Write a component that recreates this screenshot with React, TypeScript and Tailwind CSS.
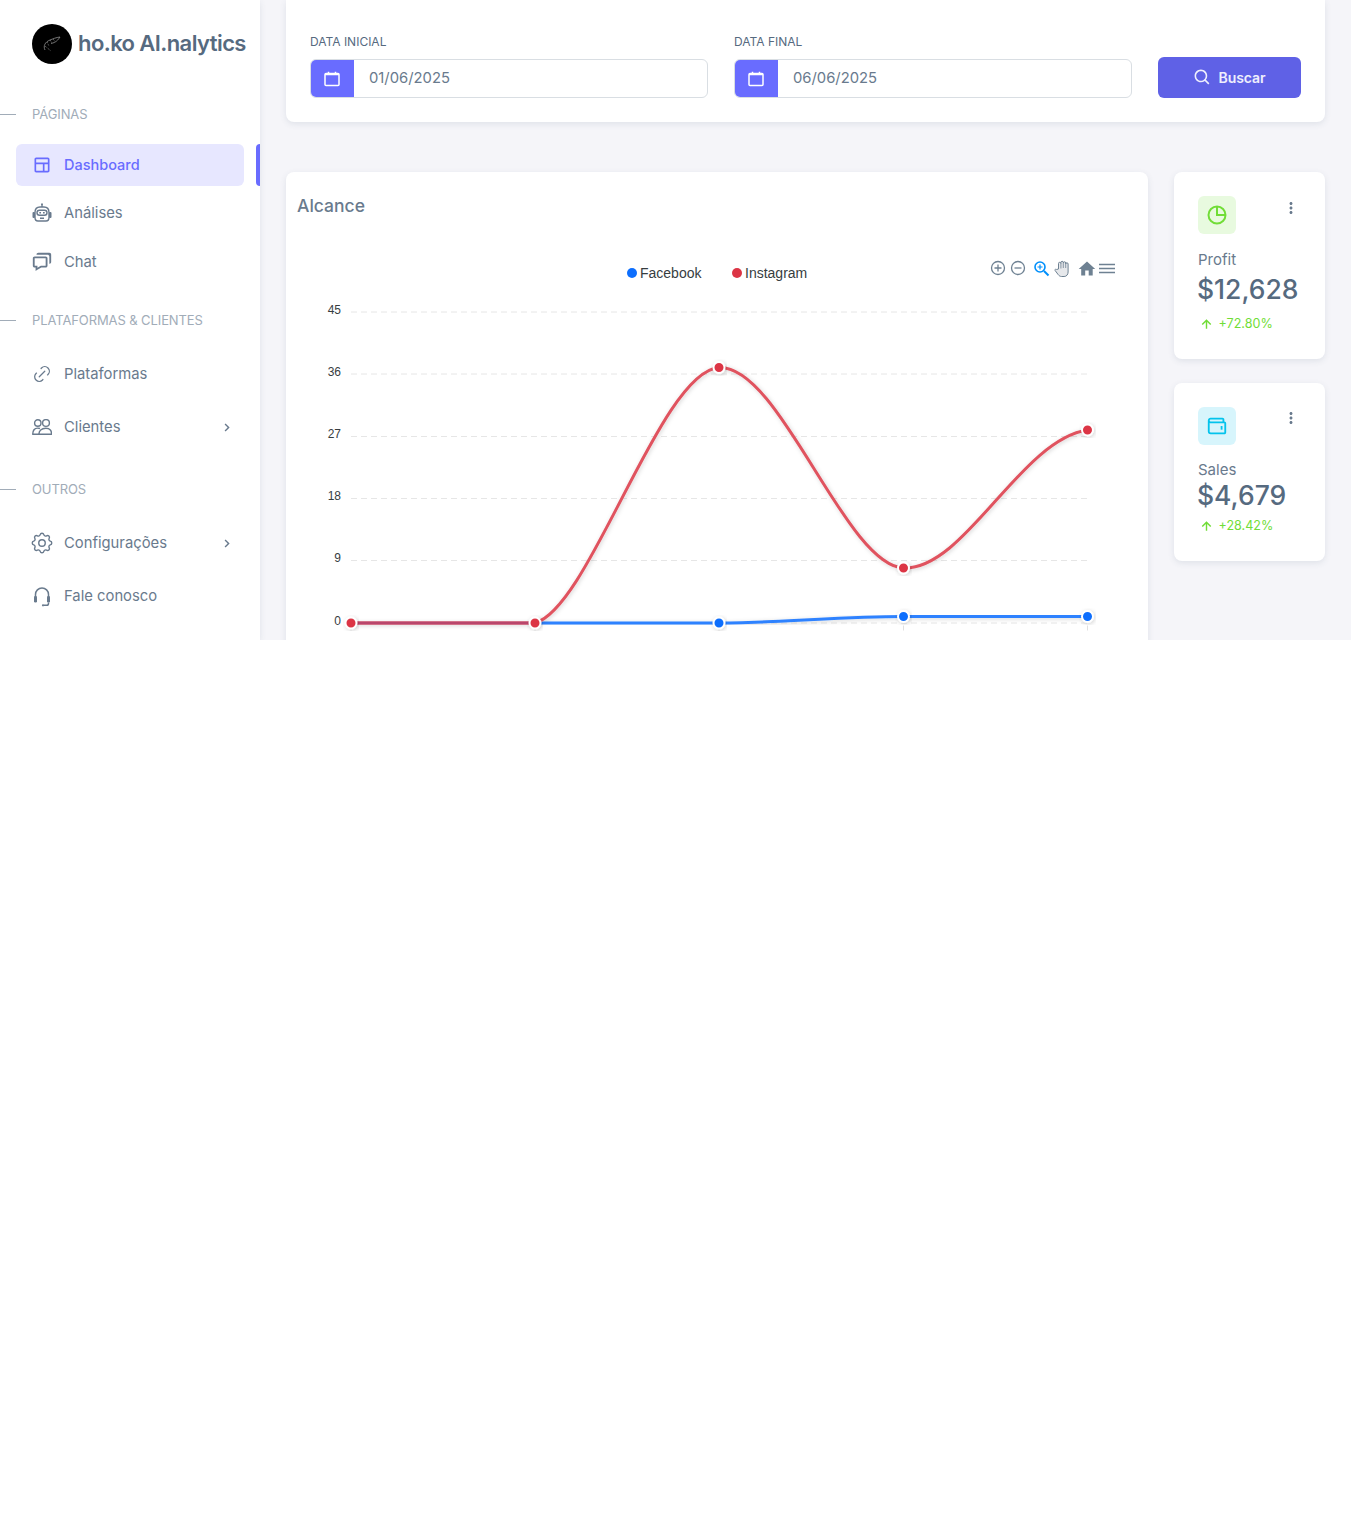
import { ReactNode } from 'react';
import {
  BiChat,
  BiChevronRight,
  BiDotsVerticalRounded,
  BiLayout,
  BiSearch,
  BiUpArrowAlt,
  BiWallet,
} from 'react-icons/bi';
import { TbLink, TbSettings } from 'react-icons/tb';

function BotIcon() {
  return (
    <svg width="20" height="20" viewBox="0 0 20 20" fill="none" stroke="#697a8d" strokeWidth="1.400">
      <path d="M10 1v3" />
      <circle cx="10" cy="1.200" r="0.900" fill="#697a8d" stroke="none" />
      <path d="M3 9.500c0-3.500 2-5.500 5-5.500h4c3 0 5 2 5 5.500v5c0 2-1 3.500-3 3.500H6c-2 0-3-1.500-3-3.500z" />
      <rect x="0.500" y="9" width="2.500" height="6" rx="1" fill="#697a8d" stroke="none" />
      <rect x="17" y="9" width="2.500" height="6" rx="1" fill="#697a8d" stroke="none" />
      <rect x="5" y="7.300" width="10" height="5" rx="2.500" />
      <path d="M7.300 9.800h1.700M11 9.800h1.700M8 15.300h4" />
    </svg>
  );
}

function UsersIcon() {
  return (
    <svg width="20" height="16" viewBox="0 0 20 16" fill="none" stroke="#697a8d" strokeWidth="1.400">
      <circle cx="5.800" cy="4" r="3.200" />
      <circle cx="14" cy="4" r="3.400" />
      <path d="M7 15.300c-.3-3.500 2.500-6 6.800-6s6 2.500 5.600 6z" strokeLinejoin="round" />
      <path d="M8 9.500c-.8-.3-1.500-.4-2.300-.4-3 0-5 2.500-5 6.200h6.300" strokeLinejoin="round" />
    </svg>
  );
}

function HeadsetIcon() {
  return (
    <svg width="20" height="21" viewBox="0 0 20 21" fill="none" stroke="#697a8d" strokeWidth="1.500">
      <path d="M3.500 11V8.500a6.500 6.500 0 0 1 13 0V11" />
      <rect x="2" y="10" width="3" height="6.500" rx="1.300" fill="#697a8d" stroke="none" />
      <rect x="15" y="10" width="3" height="6.500" rx="1.300" fill="#697a8d" stroke="none" />
      <path d="M16.500 16.500v1a1.800 1.800 0 0 1-1.800 1.800h-3" />
      <circle cx="11" cy="19.300" r="1.100" fill="#697a8d" stroke="none" />
    </svg>
  );
}

function SectionLabel({ children, className }: { children: ReactNode; className: string }) {
  return (
    <div className={`flex items-center gap-4 h-4 ${className}`}>
      <div className="w-4 h-px bg-[#a1acb8] -mt-px" />
      <span className="text-[13px] text-[#a1acb8] uppercase tracking-[-0.1px]">{children}</span>
    </div>
  );
}

function NavItem({
  icon,
  label,
  className,
  chevron,
}: {
  icon: ReactNode;
  label: string;
  className: string;
  chevron?: boolean;
}) {
  return (
    <div className={`flex items-center h-[42px] pl-8 pr-[25px] text-[#697a8d] text-[14.8px] ${className}`}>
      <div className="w-5 flex justify-center text-[#697a8d]">{icon}</div>
      <span className="ml-3">{label}</span>
      {chevron && <BiChevronRight className="ml-auto text-[17px]" />}
    </div>
  );
}

function CalendarIcon() {
  return (
    <svg width="16" height="16" viewBox="0 0 16 16" fill="none" stroke="white" strokeWidth="1.500">
      <rect x="1" y="2.500" width="14" height="12" rx="1" />
      <path d="M1 3.500h14M4.500 0.800v2M11.500 0.800v2" />
    </svg>
  );
}

function DateField({ label, value }: { label: string; value: string }) {
  return (
    <div className="flex-1">
      <label className="block text-[12px] leading-4 text-[#566a7f] uppercase mb-[9px]">{label}</label>
      <div className="flex h-[39px] rounded-md border border-[#d9dee3] overflow-hidden bg-white">
        <div className="w-[44px] -ml-px -my-px flex items-center justify-center bg-[#696cff]">
          <CalendarIcon />
        </div>
        <div className="flex items-center pl-[15px] text-[14.8px] text-[#697a8d]">{value}</div>
      </div>
    </div>
  );
}

function StatCard({
  icon,
  iconBg,
  label,
  value,
  change,
  className,
  labelClass,
  valueClass,
  dotsClass,
}: {
  icon: ReactNode;
  iconBg: string;
  label: string;
  value: string;
  change: string;
  className: string;
  labelClass: string;
  valueClass: string;
  dotsClass: string;
}) {
  return (
    <div className={`bg-white rounded-lg shadow-[0_2px_6px_0_rgba(67,89,113,0.12)] px-6 pt-6 ${className}`}>
      <div className="flex justify-between">
        <div className={`w-[38px] h-[38px] rounded-md flex items-center justify-center ${iconBg}`}>{icon}</div>
        <BiDotsVerticalRounded className={`text-[18px] text-[#697a8d] mr-[1px] ${dotsClass}`} />
      </div>
      <div className={`text-[15px] leading-5 text-[#697a8d] ${labelClass}`}>{label}</div>
      <div className={`text-[26.5px] font-medium leading-[38px] text-[#566a7f] -ml-px ${valueClass}`}>{value}</div>
      <div className="flex items-center text-[12.6px] text-[#71dd37]">
        <BiUpArrowAlt className="text-[17px] ml-[-0.5px]" />
        <span className="ml-[4px]">{change}</span>
      </div>
    </div>
  );
}

const gridLines = [
  { y: 312, label: '45', ty: 314 },
  { y: 374, label: '36', ty: 376 },
  { y: 436.5, label: '27', ty: 438 },
  { y: 498.5, label: '18', ty: 500 },
  { y: 560.5, label: '9', ty: 562 },
  { y: 623, label: '0', ty: 625 },
];

const redPoints = [
  [351, 623],
  [535, 623],
  [719, 367.5],
  [903.5, 568],
  [1087.5, 430],
];

const bluePoints = [
  [719, 623],
  [903.5, 616.5],
  [1087.5, 616.5],
];

function ReachChart() {
  return (
    <svg className="block" width="862" height="440" viewBox="286 232 862 440" fontFamily="'Liberation Sans', Arial, sans-serif">
      <defs>
        <filter id="soft" x="-20%" y="-20%" width="140%" height="140%">
          <feDropShadow dx="1" dy="1" stdDeviation="2" floodColor="#000" floodOpacity="0.18" />
        </filter>
      </defs>

      <circle cx="632" cy="273" r="5" fill="#0d6efd" />
      <text x="640" y="278" fontSize="14" fill="#373d3f">Facebook</text>
      <circle cx="737" cy="273" r="5" fill="#dc3545" />
      <text x="745" y="278" fontSize="14" fill="#373d3f">Instagram</text>

      {/* toolbar */}
      <g fill="none" stroke="#6e8192" strokeWidth="1.300">
        <circle cx="998" cy="268" r="6.500" />
        <path d="M994.500 268h7M998 264.500v7" />
        <circle cx="1018" cy="268" r="6.500" />
        <path d="M1014.500 268h7" />
      </g>
      <g fill="none" stroke="#008ffb">
        <circle cx="1040" cy="267" r="5" strokeWidth="1.600" />
        <path d="M1044 271l4.500 4.500" strokeWidth="2" />
        <path d="M1037.500 267h5M1040 264.500v5" strokeWidth="1.200" />
      </g>
      <path
        d="M1058.500 269v-5.500a1.200 1.200 0 0 1 2.400 0v-1a1.200 1.200 0 0 1 2.400 0v.5a1.200 1.200 0 0 1 2.400 0v1a1.200 1.200 0 0 1 2.400 0v8c0 2.500-1.500 4.500-4 4.500h-2.500c-1.500 0-2.500-.7-3.500-2l-3-4c-.7-1 .8-1.800 1.500-1z"
        fill="#e6e8eb"
        stroke="#6e8192"
        strokeWidth="1"
      />
      <path d="M1060.900 263.500v5M1063.300 263v5M1065.700 264v4" stroke="#6e8192" strokeWidth="0.800" />
      <path d="M1085.200 275.500v-5h3.500v5h4v-6.500h2.500l-8.200-7.400-8.300 7.400h2.500v6.500z" fill="#6e8192" />
      <path d="M1099 264.500h16M1099 268.500h16M1099 272.500h16" stroke="#6e8192" strokeWidth="1.700" />

      {gridLines.map((g) => (
        <g key={g.label}>
          <line x1="351" x2="1087" y1={g.y} y2={g.y} stroke="#e6e6e6" strokeDasharray="6 4" />
          <text x="341" y={g.ty} textAnchor="end" fontSize="12" fill="#373d3f">{g.label}</text>
        </g>
      ))}
      <path d="M351 625.500v5M535 625.500v5M719 625.500v5M903.500 625.500v5M1087.500 625.500v5" stroke="#e0e0e0" />

      <path
        d="M535 623H719C780 623 840 616.500 903.500 616.500H1087.500"
        fill="none"
        stroke="#2f82ff"
        strokeWidth="3"
        filter="url(#soft)"
      />
      <path
        d="M351 623H535C590 608 660 372 719 367.500C780 365 845 565 903.500 568C965 570 1020 440 1087.500 430"
        fill="none"
        stroke="#e0535f"
        strokeWidth="3"
        filter="url(#soft)"
      />
      <path d="M351 623H535" stroke="#b9466c" strokeWidth="3" />

      {bluePoints.map(([x, y]) => (
        <circle key={x} cx={x} cy={y} r="5.500" fill="#0d6efd" stroke="#fff" strokeWidth="2" filter="url(#soft)" />
      ))}
      {redPoints.map(([x, y]) => (
        <circle key={x} cx={x} cy={y} r="5.500" fill="#dc3545" stroke="#fff" strokeWidth="2" filter="url(#soft)" />
      ))}
    </svg>
  );
}

export default function App() {
  return (
    <div className="h-[640px] overflow-hidden flex bg-[#f5f5f9] font-['Inter','Liberation_Sans',sans-serif]">
      {/* Sidebar */}
      <aside className="w-[260px] shrink-0 bg-white shadow-[0_2px_6px_0_rgba(67,89,113,0.12)]">
        <div className="flex items-center pl-8 pt-6">
          <div className="w-10 h-10 rounded-full bg-black flex items-center justify-center">
            <svg width="20" height="18" viewBox="0 0 20 18" fill="none" stroke="#8f8f8f" strokeWidth="0.800">
              <path d="M3 15c-2-4 0-8 5-10 3-1.200 6-2.500 10-3-2 3-4 5.500-9 6.500" />
              <path d="M5 7l2 4M8 5l2 3M11 4l2 2.500M3 11l6 5" strokeDasharray="1 1" />
            </svg>
          </div>
          <span className="ml-[6px] -mt-[2px] text-[22px] leading-10 font-semibold text-[#566a7f] tracking-[-0.58px]">ho.ko AI.nalytics</span>
        </div>

        <SectionLabel className="mt-[43px]">Páginas</SectionLabel>
        <div className="relative mt-[21px]">
          <div className="mx-4 h-[42px] rounded-md bg-[#e7e7ff] flex items-center pl-4 text-[14.5px] font-medium text-[#696cff]">
            <div className="w-5 flex justify-center text-[20px]"><BiLayout /></div>
            <span className="ml-3">Dashboard</span>
          </div>
          <div className="absolute right-0 top-0 w-1 h-[42px] bg-[#696cff] rounded-l" />
        </div>
        <NavItem className="mt-[6px]" icon={<BotIcon />} label="Análises" />
        <NavItem className="mt-[7px]" icon={<BiChat className="text-[22px] shrink-0" />} label="Chat" />

        <SectionLabel className="mt-[30px]">Plataformas &amp; clientes</SectionLabel>
        <NavItem className="mt-[24px]" icon={<TbLink className="text-[22px] shrink-0 stroke-[1.4]" />} label="Plataformas" />
        <NavItem className="mt-[11px]" icon={<UsersIcon />} label="Clientes" chevron />

        <SectionLabel className="mt-[34px]">Outros</SectionLabel>
        <NavItem className="mt-[24px]" icon={<TbSettings className="text-[26px] shrink-0 stroke-[1.3]" />} label="Configurações" chevron />
        <NavItem className="mt-[11px]" icon={<HeadsetIcon />} label="Fale conosco" />
      </aside>

      {/* Main */}
      <main className="flex-1 px-[26px]">
        <div className="bg-white rounded-b-lg shadow-[0_2px_6px_0_rgba(67,89,113,0.12)] flex items-end gap-[26px] px-6 pt-[34px] pb-6">
          <div className="flex-1 flex gap-[26px]">
            <DateField label="Data inicial" value="01/06/2025" />
            <DateField label="Data final" value="06/06/2025" />
          </div>
          <button className="w-[143px] h-[41px] pb-px rounded-md bg-[#5f61e6] text-white/90 text-[14px] font-semibold tracking-[-0.1px] flex items-center justify-center gap-[7px]">
            <BiSearch className="text-[19px] -ml-px" />
            Buscar
          </button>
        </div>

        <div className="flex gap-[26px] mt-[50px] items-start">
          <section className="w-[862px] h-[500px] bg-white rounded-lg shadow-[0_2px_6px_0_rgba(67,89,113,0.12)]">
            <h2 className="text-[17.5px] leading-6 font-medium text-[#697a8d] pl-[11px] pt-[22px] h-[60px]">Alcance</h2>
            <ReachChart />
          </section>

          <div className="w-[151px] flex flex-col gap-6">
            <StatCard
              className="h-[187px]"
              labelClass="mt-[16px]"
              valueClass="mt-0 mb-[7px]"
              dotsClass="mt-[3px]"
              icon={
                <svg width="20" height="20" viewBox="0 0 20 20" fill="none" stroke="#71dd37" strokeWidth="2">
                  <circle cx="10" cy="10" r="8.500" />
                  <path d="M10 1.500V10H18.500" />
                </svg>
              }
              iconBg="bg-[#e8fadf]"
              label="Profit"
              value="$12,628"
              change="+72.80%"
            />
            <StatCard
              className="h-[178px]"
              labelClass="mt-[15px]"
              valueClass="-mt-[4px] mb-[3px]"
              dotsClass="mt-[2px]"
              icon={<BiWallet className="text-[22px] text-[#03c3ec]" />}
              iconBg="bg-[#d7f5fc]"
              label="Sales"
              value="$4,679"
              change="+28.42%"
            />
          </div>
        </div>
      </main>
    </div>
  );
}
